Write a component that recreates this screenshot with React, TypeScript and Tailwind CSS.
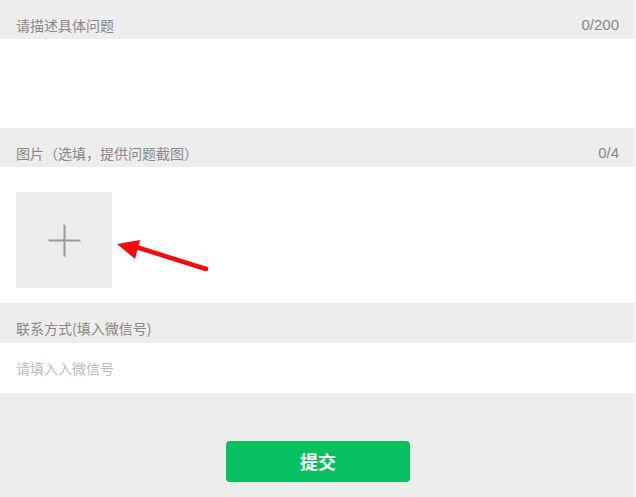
import React from 'react';

const font = { fontFamily: '"Noto Sans CJK SC", "Liberation Sans", sans-serif' };

const SectionHeader = ({ title, count }: { title: string; count?: string }) => (
  <div className="flex h-[39px] items-end justify-between px-4 pb-[4px] text-[14px] leading-[20px] text-[#888]">
    <span>{title}</span>
    {count && <span className="mr-[-1px] font-['Liberation_Sans'] text-[15px]">{count}</span>}
  </div>
);

const FeedbackForm = () => {
  const [desc, setDesc] = React.useState('');
  const [wechat, setWechat] = React.useState('');

  return (
    <div className="flex min-h-[497px] w-[636px] bg-[#ededed]" style={font}>
      <div className="flex w-[634px] flex-col">
        {/* Description */}
        <SectionHeader title="请描述具体问题" count={`${desc.length}/200`} />
        <textarea
          className="h-[89px] w-full resize-none bg-white px-4 py-2 text-[14px] outline-none"
          value={desc}
          maxLength={200}
          onChange={(e) => setDesc(e.target.value)}
        />

        {/* Screenshots */}
        <SectionHeader title="图片（选填，提供问题截图）" count="0/4" />
        <div className="relative h-[136px] bg-white px-4 pt-[25px]">
          <button
            type="button"
            className="flex h-[96px] w-[96px] items-center justify-center bg-[#ececec]"
          >
            <svg width="33" height="33" viewBox="0 0 33 33">
              <path d="M16.5 0.5v32M0.5 16.5h32" stroke="#999" strokeWidth="2" />
            </svg>
          </button>
          {/* annotation arrow */}
          <svg className="absolute left-[112px] top-[70px]" width="100" height="40" viewBox="0 0 100 40">
            <path d="M94 32L24 10" stroke="#f20c0c" strokeWidth="4.5" strokeLinecap="round" />
            <path d="M5 7L28 3L23 22Z" fill="#f20c0c" />
          </svg>
        </div>

        {/* Contact */}
        <div className="flex h-[40px] items-end px-4 pb-[5px] text-[14px] leading-[20px] text-[#888]">
          联系方式(填入微信号)
        </div>
        <input
          className="h-[50px] w-full bg-white px-4 text-[14px] text-[#333] outline-none placeholder:text-[#bbb]"
          placeholder="请填入入微信号"
          value={wechat}
          onChange={(e) => setWechat(e.target.value)}
        />

        {/* Submit */}
        <div className="flex justify-center pt-[48px]">
          <button
            type="button"
            className="ml-[2px] h-[41px] w-[184px] rounded-[4px] bg-[#07c160] text-[18px] font-bold text-white"
          >
            提交
          </button>
        </div>
      </div>
      <div className="w-[2px] bg-[#f6f6f6]" />
    </div>
  );
};

export default function App() {
  return <FeedbackForm />;
}
